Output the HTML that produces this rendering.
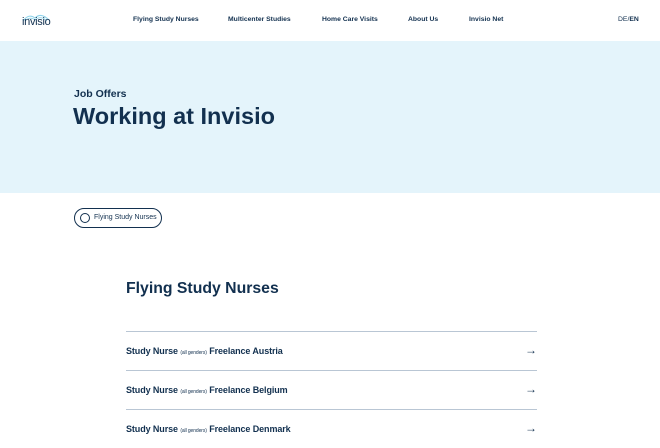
<!DOCTYPE html>
<html><head><style>
*{margin:0;padding:0;box-sizing:border-box}
body{width:660px;height:440px;overflow:hidden;background:#fff;font-family:"Liberation Sans",sans-serif;color:#12304f;position:relative}
.a{position:absolute;white-space:nowrap}
.nav{font-size:6.8px;font-weight:bold;top:16px}
.hero{position:absolute;left:0;top:41px;width:660px;height:152px;background:#e4f4fb}
.row{position:absolute;left:126px;width:411px;border-top:1.5px solid #b9c6d4;height:39px}
.row span.t{position:absolute;left:0;top:14px;font-size:9px;font-weight:bold;letter-spacing:-0.1px}
.row small{font-size:5px;font-weight:normal}
.row .ar{position:absolute;right:0;top:11px;font-size:12px;font-weight:bold}
</style></head><body>
<svg class="a" style="left:21px;top:12px" width="32" height="18" viewBox="0 0 32 18"><path d="M2 9 Q8 1 14 6 Q20 0 28 8" fill="none" stroke="#8fd3ea" stroke-width="1"/><path d="M4 9 Q9 4 14 8 Q20 3 26 9" fill="none" stroke="#8fd3ea" stroke-width="0.8"/></svg>
<div class="a" style="left:22px;top:16px;font-size:11px;color:#12304f;letter-spacing:-0.3px">invisio</div>
<div class="a nav" style="left:133px">Flying Study Nurses</div>
<div class="a nav" style="left:228px">Multicenter Studies</div>
<div class="a nav" style="left:322px">Home Care Visits</div>
<div class="a nav" style="left:408px">About Us</div>
<div class="a nav" style="left:469px">Invisio Net</div>
<div class="a nav" style="left:618px;font-weight:normal">DE/<b>EN</b></div>
<div class="hero"></div>
<div class="a" style="left:74px;top:88px;font-size:10.5px;font-weight:bold">Job Offers</div>
<div class="a" style="left:73px;top:103px;font-size:23.5px;font-weight:bold">Working at Invisio</div>
<div class="a" style="left:74px;top:208px;width:88px;height:20px;border:1.5px solid #12304f;border-radius:10px"></div>
<div class="a" style="left:80px;top:213px;width:10px;height:10px;border:1.3px solid #12304f;border-radius:50%"></div>
<div class="a" style="left:94px;top:214px;font-size:7px">Flying Study Nurses</div>
<div class="a" style="left:126px;top:280px;font-size:15.8px;font-weight:bold">Flying Study Nurses</div>
<div class="row" style="top:331px"><span class="t">Study Nurse <small>(all genders)</small> Freelance Austria</span><span class="ar">→</span></div>
<div class="row" style="top:370px"><span class="t">Study Nurse <small>(all genders)</small> Freelance Belgium</span><span class="ar">→</span></div>
<div class="row" style="top:409px"><span class="t">Study Nurse <small>(all genders)</small> Freelance Denmark</span><span class="ar">→</span></div>
</body></html>
